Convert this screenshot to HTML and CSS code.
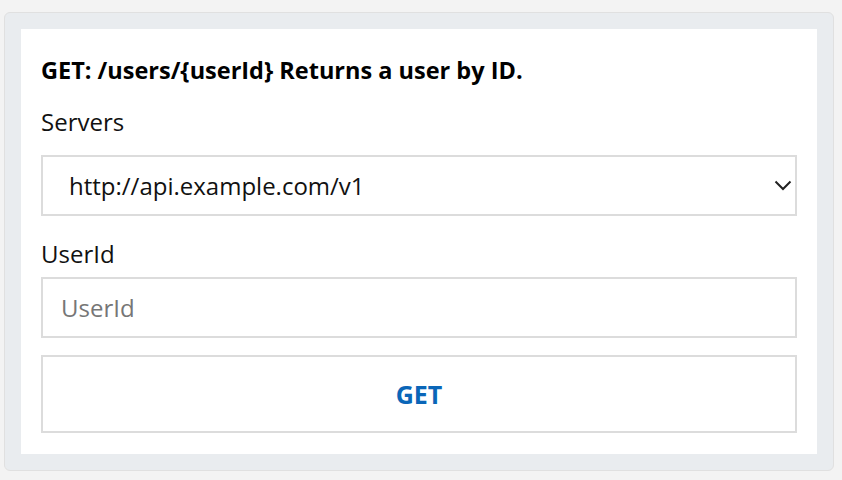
FILE: index.html
```html
<!DOCTYPE html>
<html lang="en">
<head>
<meta charset="utf-8">
<title>GET /users/{userId}</title>
<link rel="stylesheet" href="styles.css">
</head>
<body>
<div class="card">
  <form class="panel">
    <h2 class="title">GET: /users/{userId} Returns a user by ID.</h2>
    <label class="label label-servers">Servers</label>
    <div class="select" role="combobox">
      <span class="select-value">http://api.example.com/v1</span>
      <svg class="chevron" width="18" height="11" viewBox="0 0 18 11" aria-hidden="true">
        <path d="M1.5 1.5 L9 9 L16.5 1.5" fill="none" stroke="#222" stroke-width="2"/>
      </svg>
    </div>
    <label class="label label-user" for="userId">UserId</label>
    <input class="input" id="userId" type="text" placeholder="UserId">
    <button class="button" type="button">GET</button>
  </form>
</div>
</body>
</html>
```
FILE: styles.css
```css
* { box-sizing: border-box; }
html, body { margin: 0; padding: 0; }
body {
  background: #f3f3f3;
  font-family: "Open Sans", "Noto Sans", "Liberation Sans", sans-serif;
  color: #111;
  padding: 12px 8px 9px 4px;
}
.card {
  width: 830px;
  background: #e9ecef;
  border: 1px solid #e0e0e0;
  border-radius: 6px;
  padding: 16px;
}
.panel {
  display: flex;
  flex-direction: column;
  background: #fff;
  padding: 0 20px 21px;
  margin: 0;
}
.title {
  margin: 26px 0 0;
  font-size: 23.5px;
  line-height: 30px;
  font-weight: 700;
  color: #000;
}
.label {
  font-size: 24px;
  line-height: 30px;
  color: #111;
}
.label-servers { margin-top: 22px; }
.select {
  margin-top: 18px;
  height: 61px;
  border: 2px solid #dcdcdc;
  display: flex;
  align-items: center;
  justify-content: space-between;
  padding: 0 3px 0 26px;
  font-size: 24px;
  color: #111;
}
.chevron { display: block; }
.label-user { margin-top: 23px; }
.input {
  margin-top: 8px;
  height: 61px;
  border: 2px solid #dcdcdc;
  padding: 0 18px;
  font-family: inherit;
  font-size: 24px;
  color: #111;
  outline: none;
}
.input::placeholder { color: #767676; }
.button {
  margin-top: 17px;
  height: 78px;
  border: 2px solid #dcdcdc;
  background: #fff;
  font-family: inherit;
  font-size: 25px;
  font-weight: 700;
  color: #0a66b8;
  cursor: pointer;
}
```
